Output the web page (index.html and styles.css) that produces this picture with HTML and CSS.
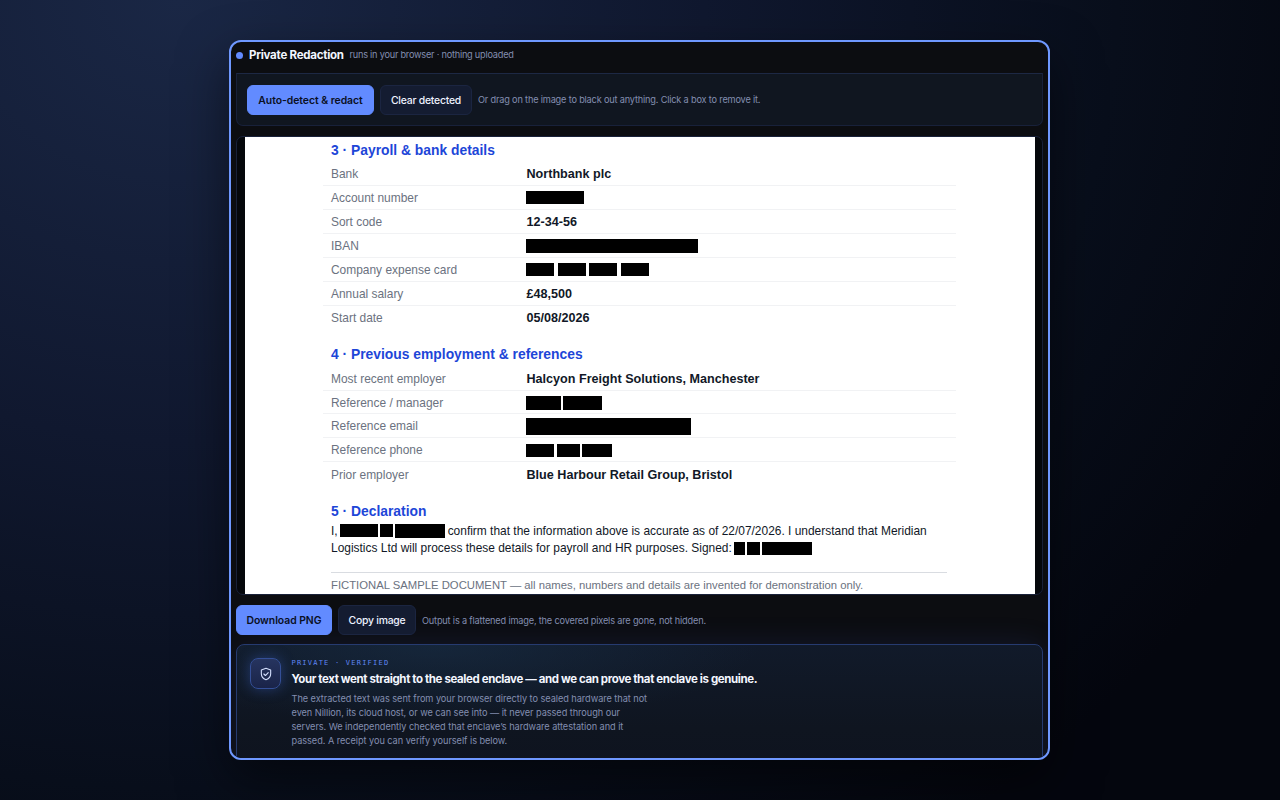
FILE: index.html
```html
<!DOCTYPE html>
<html lang="en">

<head>
    <meta charset="UTF-8">
    <meta name="viewport" content="width=device-width, initial-scale=1.0">
    <title>Private Redaction</title>
    <link rel="stylesheet" href="styles.css">
</head>

<body>

    <div class="panel">
        <header class="header">
            <span class="dot"></span>
            <h1>Private Redaction</h1>
            <span class="tagline">runs in your browser · nothing uploaded</span>
        </header>

        <div class="toolbar">
            <button type="button" class="btn primary detect">Auto-detect &amp; redact</button>
            <button type="button" class="btn clear">Clear detected</button>
            <span class="hint">Or drag on the image to black out anything. Click a box to remove it.</span>
        </div>

        <div class="viewer">
            <div class="sheet">
                <h2>3 · Payroll &amp; bank details</h2>
                <dl class="rows payroll">
                    <div class="row"><dt>Bank</dt><dd>Northbank plc</dd></div>
                    <div class="row"><dt>Account number</dt><dd><i class="box account"></i></dd></div>
                    <div class="row"><dt>Sort code</dt><dd>12-34-56</dd></div>
                    <div class="row"><dt>IBAN</dt><dd><i class="box iban"></i></dd></div>
                    <div class="row"><dt>Company expense card</dt><dd class="card-number"><i class="box"></i><i class="box"></i><i class="box"></i><i class="box"></i></dd></div>
                    <div class="row"><dt>Annual salary</dt><dd>£48,500</dd></div>
                    <div class="row"><dt>Start date</dt><dd>05/08/2026</dd></div>
                </dl>

                <h2>4 · Previous employment &amp; references</h2>
                <dl class="rows references">
                    <div class="row"><dt>Most recent employer</dt><dd>Halcyon Freight Solutions, Manchester</dd></div>
                    <div class="row"><dt>Reference / manager</dt><dd class="manager"><i class="box first"></i><i class="box last"></i></dd></div>
                    <div class="row"><dt>Reference email</dt><dd><i class="box email"></i></dd></div>
                    <div class="row"><dt>Reference phone</dt><dd class="phone"><i class="box code"></i><i class="box mid"></i><i class="box end"></i></dd></div>
                    <div class="row"><dt>Prior employer</dt><dd>Blue Harbour Retail Group, Bristol</dd></div>
                </dl>

                <h2>5 · Declaration</h2>
                <p class="declaration">I,<span class="name"><i class="box given"></i><i class="box initial"></i><i class="box family"></i></span>confirm that the information above is accurate as of 22/07/2026. I understand that Meridian<br>Logistics Ltd will process these details for payroll and HR purposes. Signed:<span class="name signed"><i class="box short"></i><i class="box initial"></i><i class="box family"></i></span></p>

                <p class="footnote">FICTIONAL SAMPLE DOCUMENT — all names, numbers and details are invented for demonstration only.</p>
            </div>
        </div>

        <div class="actions">
            <button type="button" class="btn primary download">Download PNG</button>
            <button type="button" class="btn copy">Copy image</button>
            <span class="hint">Output is a flattened image, the covered pixels are gone, not hidden.</span>
        </div>

        <section class="verified">
            <div class="shield">
                <svg width="14" height="14" viewBox="0 0 24 24" fill="none" stroke="currentColor" stroke-width="1.9" stroke-linecap="round" stroke-linejoin="round">
                    <path d="M12 2.2 20 5.2v6.3c0 5-3.3 8.6-8 10.3-4.7-1.7-8-5.3-8-10.3V5.2z"/>
                    <path d="m8.3 12 2.7 2.6 4.8-5"/>
                </svg>
            </div>
            <div class="verified-text">
                <div class="eyebrow">PRIVATE · VERIFIED</div>
                <h3>Your text went straight to the sealed enclave — and we can prove that enclave is genuine.</h3>
                <p>The extracted text was sent from your browser directly to sealed hardware that not<br>
                    even Nillion, its cloud host, or we can see into — it never passed through our<br>
                    servers. We independently checked that enclave’s hardware attestation and it<br>
                    passed. A receipt you can verify yourself is below.</p>
            </div>
        </section>
    </div>

</body>

</html>
```

FILE: styles.css
```css
* {
    box-sizing: border-box;
}

body {
    font-family: Inter, "Liberation Sans", sans-serif;
    background: radial-gradient(ellipse 1250px 1050px at 14% 0%, #1a2745 0%, #10182f 42%, #080e1b 75%, #04060e 100%);
    margin: 0;
    height: 100vh;
    padding: 40px 0 0 229px;
    overflow: hidden;
}

h1, h2, h3, p, dl, dd {
    margin: 0;
}

.panel {
    width: 821px;
    height: 720px;
    padding: 0 5px;
    border: 2px solid #6f98ff;
    border-radius: 12px;
    background-color: #0c0d11;
    box-shadow: 0 20px 50px rgba(0, 0, 0, 0.5);
    overflow: hidden;
}

.header {
    display: flex;
    align-items: center;
    height: 31px;
    padding-bottom: 5px;
}

.dot {
    width: 7px;
    height: 7px;
    border-radius: 50%;
    background-color: #628bff;
}

h1 {
    margin-left: 6px;
    width: 100.5px;
    font-size: 11.5px;
    font-weight: 700;
    letter-spacing: -0.25px;
    color: #f3f6ff;
    white-space: nowrap;
}

.tagline, .hint {
    font-size: 9.2px;
    letter-spacing: -0.18px;
    color: #838eb0;
    white-space: nowrap;
}

.tagline {
    letter-spacing: -0.23px;
    padding-bottom: 1px;
}

.toolbar {
    display: flex;
    align-items: center;
    gap: 6px;
    height: 53px;
    padding: 0 10px;
    border: 1px solid #18213a;
    border-top-color: #1d2844;
    border-radius: 0 0 7px 7px;
    background-color: #101620;
}

.btn {
    height: 30px;
    padding: 1px 0 0;
    border: 1px solid #1b2541;
    border-radius: 6px;
    background-color: #141c31;
    color: #eef2ff;
    font-family: inherit;
    font-size: 10.4px;
    font-weight: 500;
    letter-spacing: -0.22px;
}

.btn.primary {
    border-color: #628bff;
    background-color: #628bff;
    color: #0a1024;
    font-weight: 600;
    letter-spacing: -0.03px;
}

.detect { width: 127px; }
.clear { width: 92px; }
.download { width: 96px; }
.copy { width: 78px; }

/* document preview */
.viewer {
    height: 459px;
    margin-top: 10px;
    padding: 0 7.5px;
    border: 1px solid #192139;
    border-radius: 7px;
    background-color: #05070b;
    overflow: hidden;
}

.sheet {
    height: 457px;
    padding: 0 78.5px;
    background-color: #fff;
    font-family: "Liberation Sans", Arial, sans-serif;
    font-size: 11.95px;
    color: #111827;
    white-space: nowrap;
}

h2 {
    height: 25px;
    padding: 0.5px 0 0 8px;
    font-size: 13.85px;
    line-height: 25px;
    font-weight: 700;
    color: #1d46d8;
}

.payroll {
    height: 179.6px;
}

.payroll + h2 {
    padding-top: 0;
}

.references {
    height: 131.8px;
}

.row {
    display: flex;
    align-items: center;
    height: 23.95px;
    padding-left: 8px;
    border-bottom: 1px solid #f1f2f4;
}

.row:last-child {
    border-bottom: none;
}

dt {
    width: 195.5px;
    padding-top: 1px;
    color: #6b7280;
}

dd {
    display: flex;
    align-items: center;
    padding-top: 1px;
    font-size: 12.6px;
    font-weight: 700;
}

.box {
    display: inline-block;
    height: 13px;
    margin-left: -0.5px;
    background-color: #000;
}

.account { width: 58px; }
.iban { width: 172px; height: 14px; }
.card-number { gap: 4px; }
.card-number .box { width: 28px; }
.manager { gap: 2.5px; }
.manager .box { height: 14px; }
.first { width: 35px; }
.last { width: 39px; }
.email { width: 165px; height: 17px; }
.code { width: 28px; }
.mid { width: 23px; margin-left: 3px; }
.end { width: 30px; margin-left: 2px; }

.declaration {
    padding-left: 8px;
    margin-top: -0.5px;
    line-height: 17.3px;
}

.name {
    display: inline-flex;
    gap: 2.5px;
    margin: 0 3px 0 2.5px;
    height: 13px;
    vertical-align: -2.5px;
}

.given { width: 38px; }
.initial { width: 13px; }
.family { width: 50px; height: 14px; }
.signed .family { height: 13px; }
.short { width: 11px; }

.footnote {
    width: 616px;
    margin: 15px 0 0 8px;
    border-top: 1px solid #d9dce1;
    font-size: 11.3px;
    line-height: 24px;
    color: #6b7280;
}

.actions {
    display: flex;
    align-items: center;
    gap: 6px;
    height: 30px;
    margin-top: 10px;
}

/* attestation card */
.verified {
    display: flex;
    gap: 10.5px;
    height: 140px;
    margin-top: 9px;
    padding: 13px;
    border: 1px solid #263b70;
    border-radius: 8px;
    background: radial-gradient(ellipse 320px 80px at 25% 0%, rgba(25, 48, 72, 0.55), transparent), linear-gradient(#111a2a, #0f1520 60%, #0e131f);
    box-shadow: 0 0 30px rgba(70, 110, 230, 0.12);
}

.shield {
    display: flex;
    flex: none;
    align-items: center;
    justify-content: center;
    width: 31px;
    height: 31px;
    border: 1px solid #344f97;
    border-radius: 8px;
    background: linear-gradient(#26345f, #1a2449);
    box-shadow: 0 0 14px rgba(70, 115, 240, 0.35);
    color: #d3defc;
}

.eyebrow {
    font-family: "DejaVu Sans Mono", "Liberation Mono", monospace;
    font-size: 7px;
    line-height: 10px;
    letter-spacing: 1.22px;
    color: #5f86f5;
}

h3 {
    margin-top: 3px;
    font-size: 11.5px;
    line-height: 16px;
    font-weight: 700;
    letter-spacing: -0.39px;
    color: #f3f6ff;
    white-space: nowrap;
}

.verified p {
    margin-top: 4.8px;
    font-size: 9.2px;
    line-height: 14.2px;
    letter-spacing: -0.05px;
    color: #838eb0;
    white-space: nowrap;
}
```
